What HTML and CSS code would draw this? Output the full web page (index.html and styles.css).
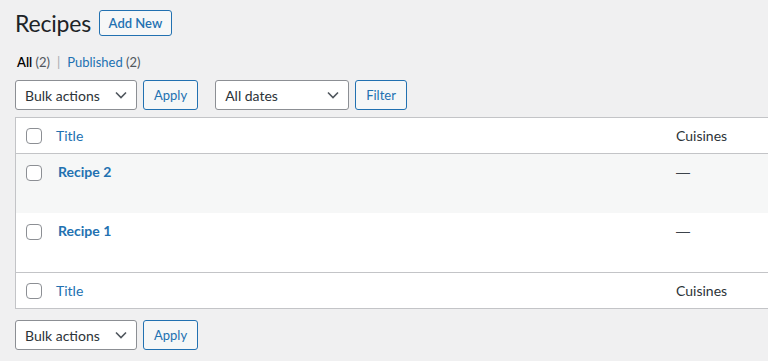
FILE: index.html
```html
<!DOCTYPE html>
<html lang="en">
<head>
  <meta charset="UTF-8" />
  <title>Recipes</title>
  <meta name="viewport" content="width=device-width, initial-scale=1.0" />
  <link rel="stylesheet" href="styles.css">
</head>
<body>

  <div class="wrap">

    <div class="heading">
      <h1>Recipes</h1>
      <a href="#" class="page-action">Add New</a>
    </div>

    <ul class="views">
      <li class="current">All <span class="count">(2)</span></li>
      <li class="sep">|</li>
      <li><a href="#">Published <span class="count">(2)</span></a></li>
    </ul>

    <div class="tablenav">
      <div class="select bulk">
        <span>Bulk actions</span>
        <svg width="12" height="8" viewBox="0 0 12 8"><path d="M1 1.5l5 5 5-5" fill="none" stroke="#50575e" stroke-width="1.6"/></svg>
      </div>
      <button class="btn">Apply</button>
      <div class="select dates">
        <span>All dates</span>
        <svg width="12" height="8" viewBox="0 0 12 8"><path d="M1 1.5l5 5 5-5" fill="none" stroke="#50575e" stroke-width="1.6"/></svg>
      </div>
      <button class="btn">Filter</button>
    </div>

    <table class="list-table">
      <thead>
        <tr>
          <th class="check-col"><span class="check"></span></th>
          <th class="title-col"><a href="#">Title</a></th>
          <th class="cuisine-col">Cuisines</th>
        </tr>
      </thead>
      <tbody>
        <tr class="alt">
          <td class="check-col"><span class="check"></span></td>
          <td class="title-col"><a href="#" class="row-title">Recipe 2</a></td>
          <td class="cuisine-col"><span class="dash">—</span></td>
        </tr>
        <tr>
          <td class="check-col"><span class="check"></span></td>
          <td class="title-col"><a href="#" class="row-title">Recipe 1</a></td>
          <td class="cuisine-col"><span class="dash">—</span></td>
        </tr>
      </tbody>
      <tfoot>
        <tr>
          <th class="check-col"><span class="check"></span></th>
          <th class="title-col"><a href="#">Title</a></th>
          <th class="cuisine-col">Cuisines</th>
        </tr>
      </tfoot>
    </table>

    <div class="tablenav bottom">
      <div class="select bulk">
        <span>Bulk actions</span>
        <svg width="12" height="8" viewBox="0 0 12 8"><path d="M1 1.5l5 5 5-5" fill="none" stroke="#50575e" stroke-width="1.6"/></svg>
      </div>
      <button class="btn">Apply</button>
    </div>

  </div>

</body>
</html>
```

FILE: styles.css
```css
:root {
  --azul: #2271b1;
  --texto: #1d2327;
  --texto-2: #2c3338;
  --borda: #c3c4c7;
  --fundo: #f0f0f1;
  --cinza: #8c8f94;
}

body {
  margin: 0;
  background: var(--fundo);
  color: var(--texto-2);
  font-family: Lato, "Open Sans", sans-serif;
  font-size: 13px;
  overflow: hidden;
}

a {
  color: var(--azul);
  text-decoration: none;
}

.wrap {
  padding: 10px 0 0 15px;
}

.heading {
  display: flex;
  align-items: center;
  gap: 8px;
}

h1 {
  margin: 0;
  font-size: 23px;
  font-weight: 400;
  line-height: 26px;
  color: var(--texto);
  letter-spacing: -0.2px;
}

.page-action {
  display: flex;
  align-items: center;
  justify-content: center;
  width: 73px;
  height: 26px;
  box-sizing: border-box;
  border: 1px solid var(--azul);
  border-radius: 3px;
  background: #f6f7f7;
  font-size: 13px;
  font-weight: 600;
}

.views {
  list-style: none;
  margin: 16px 0 0;
  padding: 0 0 0 2px;
  display: flex;
  gap: 6px;
  line-height: 20px;
  font-size: 13px;
}

.views .current {
  color: #000;
  font-weight: 600;
}

.count {
  color: #50575e;
  font-weight: 400;
}

.sep {
  color: #a7aaad;
  padding: 0 1px;
}

.tablenav {
  display: flex;
  gap: 6px;
  height: 30px;
  margin-top: 8px;
}

.tablenav.bottom {
  margin-top: 11px;
}

.select {
  display: flex;
  align-items: center;
  justify-content: space-between;
  box-sizing: border-box;
  height: 30px;
  padding: 0 9px;
  border: 1px solid var(--cinza);
  border-radius: 3px;
  background: #fff;
  font-size: 14px;
  color: var(--texto-2);
}

.select.bulk {
  width: 122px;
}

.select.dates {
  width: 134px;
  margin-left: 11px;
}

.btn {
  box-sizing: border-box;
  height: 30px;
  padding: 0 10px;
  border: 1px solid var(--azul);
  border-radius: 3px;
  background: #f6f7f7;
  color: var(--azul);
  font-family: inherit;
  font-size: 13px;
}

.list-table {
  margin-top: 7px;
  width: 800px;
  table-layout: fixed;
  border-collapse: separate;
  border-spacing: 0;
  background: #fff;
  border: 1px solid var(--borda);
  font-size: 14px;
}

.list-table th,
.list-table td {
  box-sizing: border-box;
  text-align: left;
  font-weight: 400;
  padding: 0 10px;
}

.list-table th {
  height: 36px;
  vertical-align: middle;
}

.list-table thead th {
  border-bottom: 1px solid var(--borda);
}

.list-table tfoot th {
  border-top: 1px solid var(--borda);
}

.list-table td {
  height: 59px;
  padding-top: 8px;
  line-height: 20px;
  vertical-align: top;
}

.list-table tr.alt td {
  background: #f6f7f7;
}

.list-table .check-col {
  width: 30px;
  padding-right: 0;
}

.list-table td.check-col {
  padding-top: 11px;
}

.check {
  display: block;
  width: 16px;
  height: 16px;
  box-sizing: border-box;
  border: 1px solid var(--cinza);
  border-radius: 4px;
  background: #fff;
}

.list-table .title-col {
  width: 620px;
}

.row-title {
  font-weight: 700;
  padding-left: 2px;
}

.cuisine-col {
  color: var(--texto-2);
}

.dash {
  font-family: "Liberation Sans", sans-serif;
  color: #3c434a;
}
```
